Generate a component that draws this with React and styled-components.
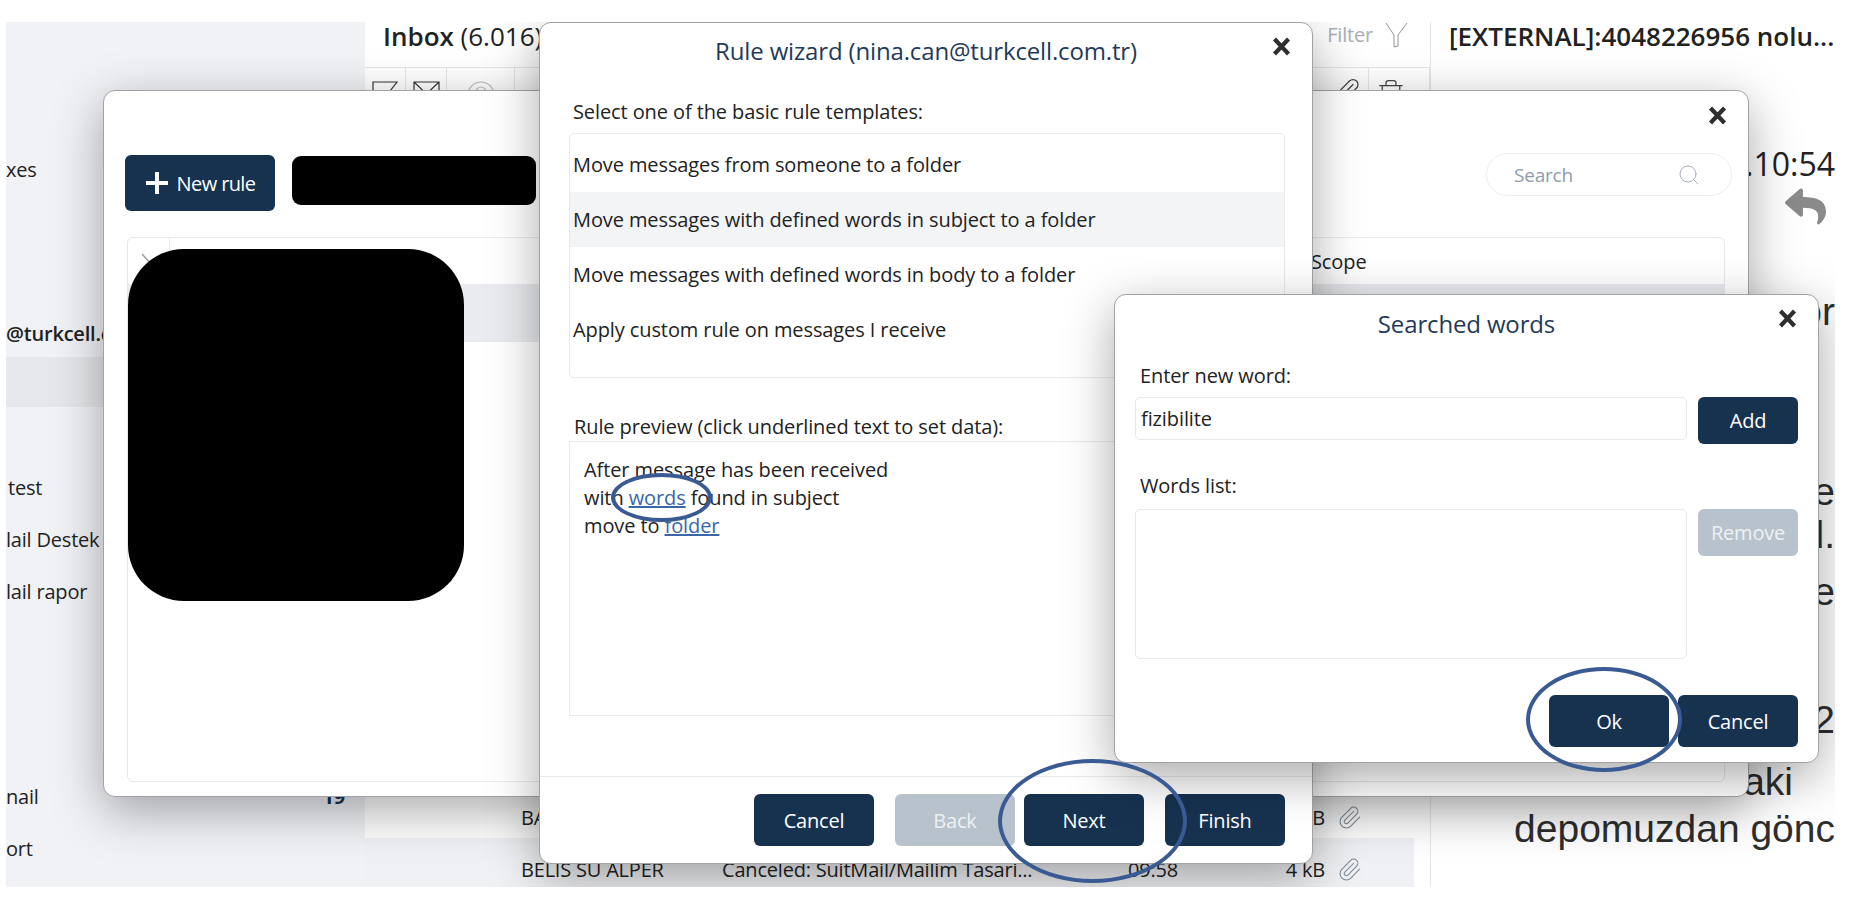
import React from 'react';
import styled, { createGlobalStyle } from 'styled-components';
import { Search, Paperclip, Trash2 } from 'lucide-react';
import { FaReply } from 'react-icons/fa';

const UI_FONT = '"Open Sans", "Noto Sans", sans-serif';
const NAVY = '#16324f';

const GlobalStyle = createGlobalStyle`
  html, body { margin: 0; padding: 0; background: #fff; }
  body { font-family: ${UI_FONT}; color: #222; }
  * { box-sizing: border-box; }
`;

const Screen = styled.div`
  position: relative;
  display: flex;
  width: 1829px;
  height: 865px;
  margin: 22px 0 0 6px;
  overflow: hidden;
  background: #fff;
`;

const Sidebar = styled.aside`
  width: 359px;
  flex-shrink: 0;
  background: #f1f2f6;
  display: flex;
  flex-direction: column;
`;

const SideItem = styled.div`
  display: flex;
  align-items: center;
  justify-content: space-between;
  height: 40px;
  margin-top: ${props => props.$top}px;
  padding: 0 20px 0 ${props => props.$indent || 0}px;
  font-size: 20px;
  letter-spacing: -0.2px;
  font-weight: ${props => (props.$strong ? 600 : 400)};
  white-space: nowrap;
`;

const SideSelected = styled.div`
  height: 50px;
  margin-top: 4px;
  background: #e5e7ea;
`;

const Count = styled.span`
  color: ${NAVY};
  font-weight: 700;
`;

const MessageList = styled.section`
  width: 1066px;
  flex-shrink: 0;
  display: flex;
  flex-direction: column;
  border-right: 1px solid #e6e7ea;
`;

const ListHead = styled.div`
  display: flex;
  align-items: flex-start;
  justify-content: space-between;
  height: 45px;
  padding: 0 22px 0 18px;
`;

const ListTitle = styled.div`
  font-size: 26px;
  line-height: 28px;
  white-space: nowrap;
  b { font-weight: 600; }
`;

const FilterBox = styled.div`
  display: flex;
  align-items: flex-start;
  gap: 12px;
  color: #a9afb7;
  font-size: 20px;
  line-height: 26px;
  letter-spacing: -0.2px;
`;

const ListTools = styled.div`
  display: flex;
  justify-content: space-between;
  height: 50px;
  border-top: 1px solid #e4e5e9;
  border-bottom: 1px solid #e4e5e9;
`;

const ToolGroup = styled.div`
  display: flex;
`;

const ToolCell = styled.div`
  display: flex;
  justify-content: center;
  width: ${props => props.$width}px;
  padding: ${props => props.$top || 13}px ${props => props.$right || 0}px 0 0;
  border-right: 1px solid #e4e5e9;
  color: #444;
`;

const Rows = styled.div`
  flex: 1;
  display: flex;
  flex-direction: column;
  justify-content: flex-end;
`;

const MailRow = styled.div`
  display: grid;
  grid-template-columns: 201px 406px 130px 67px 1fr;
  align-items: center;
  height: ${props => props.$height}px;
  padding-left: 156px;
  padding-top: ${props => props.$drop}px;
  margin-right: 16px;
  background: ${props => (props.$shaded ? '#f0f1f4' : '#fff')};
  font-size: 20px;
  letter-spacing: -0.2px;
  white-space: nowrap;
`;

const MailSize = styled.span`
  text-align: right;
`;

const MailClip = styled(Paperclip)`
  margin-left: 12px;
`;

const ReadingPane = styled.section`
  flex: 1;
  min-width: 0;
  display: flex;
  flex-direction: column;
  overflow: hidden;
`;

const Subject = styled.div`
  height: 30px;
  line-height: 28px;
  padding-left: 18px;
  font-size: 26px;
  font-weight: 600;
  white-space: nowrap;
`;

const SentTime = styled.div`
  margin-top: 94px;
  text-align: right;
  font-size: 32px;
  line-height: 36px;
  color: #222;
`;

const ReplyRow = styled.div`
  display: flex;
  justify-content: flex-end;
  padding: 4px 9px 0 0;
  color: #8a8a8a;
  line-height: 0;
`;

const BodyLine = styled.div`
  margin-top: ${props => props.$top}px;
  height: 42px;
  padding-right: ${props => props.$pad || 0}px;
  line-height: 42px;
  font-family: "Liberation Sans", Arial, sans-serif;
  font-size: 39px;
  color: #2e2e2e;
  text-align: right;
  white-space: nowrap;
`;

const Dialog = styled.div`
  position: absolute;
  left: ${props => props.$left}px;
  top: ${props => props.$top}px;
  width: ${props => props.$width}px;
  height: ${props => props.$height}px;
  display: flex;
  flex-direction: column;
  background: #fff;
  border: 1px solid #a2a2a2;
  border-radius: 12px;
  box-shadow: 0 14px 50px rgba(0, 0, 0, 0.34);
`;

const CloseButton = styled.button`
  position: absolute;
  right: ${props => props.$right}px;
  top: ${props => props.$top}px;
  padding: 0;
  border: 0;
  background: none;
  color: #2f2f2f;
  line-height: 0;
`;

const Button = styled.button`
  width: ${props => props.$width || 120}px;
  height: ${props => props.$height || 52}px;
  flex-shrink: 0;
  border: 0;
  border-radius: 6px;
  background: ${props => (props.disabled ? '#b8c2cc' : NAVY)};
  color: ${props => (props.disabled ? '#eef1f4' : '#fff')};
  font-family: ${UI_FONT};
  font-size: 20px;
  letter-spacing: -0.2px;
`;

const RulesTop = styled.div`
  display: flex;
  align-items: flex-start;
  height: 146px;
  padding: 64px 16px 0 21px;
`;

const NewRule = styled(Button)`
  display: flex;
  align-items: center;
  justify-content: center;
  gap: 8px;
  width: 150px;
  height: 56px;
  letter-spacing: -0.6px;
`;

const RedactedBar = styled.div`
  width: 244px;
  height: 49px;
  margin: 1px 0 0 17px;
  border-radius: 9px;
  background: #000;
`;

const SearchPill = styled.div`
  display: flex;
  align-items: center;
  justify-content: space-between;
  width: 246px;
  height: 43px;
  margin: -2px 0 0 auto;
  padding: 0 30px 0 27px;
  border: 1px solid #eceef1;
  border-radius: 22px;
  color: #8e9bab;
  font-size: 19px;
  letter-spacing: -0.2px;
`;

const RulesTable = styled.div`
  position: relative;
  flex: 1;
  margin: 0 23px 14px 23px;
  border: 1px solid #e8e9ec;
  border-radius: 6px;
`;

const TableHead = styled.div`
  display: flex;
  align-items: center;
  height: 47px;
  border-bottom: 1px solid #e8e9ec;
  font-size: 20px;
  letter-spacing: -0.1px;
`;

const CheckCell = styled.div`
  display: flex;
  align-items: center;
  justify-content: center;
  width: 42px;
  height: 100%;
  border-right: 1px solid #e8e9ec;
  color: #9a9a9a;
`;

const ScopeCell = styled.div`
  width: 413px;
  margin-left: auto;
`;

const SelectedRule = styled.div`
  height: 57px;
  background: #e9ebee;
`;

const RedactedBlock = styled.div`
  position: absolute;
  left: 0;
  top: 11px;
  width: 336px;
  height: 352px;
  border-radius: 56px;
  background: #000;
`;

const WizardTitle = styled.h2`
  margin: 0;
  padding-top: 13px;
  height: 75px;
  text-align: center;
  font-size: 24px;
  line-height: 30px;
  font-weight: 400;
  letter-spacing: -0.15px;
  color: #1f3a58;
`;

const WizardBody = styled.div`
  flex: 1;
  display: flex;
  flex-direction: column;
  padding: 2px 27px 0 29px;
`;

const FieldLabel = styled.div`
  font-size: 20px;
  line-height: 24px;
  letter-spacing: -0.1px;
  margin-left: ${props => props.$indent || 0}px;
`;

const TemplateList = styled.ul`
  list-style: none;
  height: 245px;
  margin: 9px 0 0;
  padding: 3px 0 0;
  border: 1px solid #e8e9ec;
  border-radius: 5px;
`;

const Template = styled.li`
  display: flex;
  align-items: center;
  height: 55px;
  padding-left: 3px;
  background: ${props => (props.$active ? '#f3f4f6' : 'transparent')};
  font-size: 20px;
  letter-spacing: -0.1px;
`;

const PreviewLabel = styled(FieldLabel)`
  margin-top: 37px;
`;

const PreviewBox = styled.div`
  height: 275px;
  margin-top: 2px;
  padding: 14px 14px;
  border: 1px solid #e8e9ec;
  font-size: 20px;
  line-height: 28px;
  letter-spacing: -0.1px;
`;

const RuleLink = styled.a`
  color: #3a66a8;
  text-decoration: underline;
`;

const WizardFooter = styled.div`
  display: flex;
  justify-content: flex-end;
  align-items: flex-start;
  height: 87px;
  padding: 17px 27px 0 0;
  border-top: 1px solid #e8e9ec;
`;

const FooterButton = styled(Button)`
  margin-left: ${props => props.$gap}px;
`;

const WordsTitle = styled.h3`
  margin: 0;
  height: 66px;
  padding-top: 14px;
  text-align: center;
  font-size: 24px;
  line-height: 30px;
  font-weight: 400;
  letter-spacing: -0.15px;
  color: #1f3a58;
`;

const WordsBody = styled.div`
  flex: 1;
  display: grid;
  grid-template-columns: 552px 100px;
  column-gap: 11px;
  grid-template-rows: 33px 47px 30px 35px 150px;
  padding: 3px 20px 0 20px;
`;

const WordsLabel = styled(FieldLabel)`
  grid-column: 1 / -1;
`;

const WordInput = styled.input`
  width: 100%;
  height: 43px;
  padding: 0 5px;
  border: 1px solid #e8e9ec;
  border-radius: 5px;
  font-family: ${UI_FONT};
  font-size: 20px;
  letter-spacing: -0.1px;
  color: #222;
`;

const WordsListBox = styled.div`
  height: 150px;
  border: 1px solid #e8e9ec;
  border-radius: 5px;
`;

const WordsGap = styled.div`
  grid-column: 1 / -1;
`;

const WordsFooter = styled.div`
  display: flex;
  justify-content: flex-end;
  gap: 9px;
  padding: 0 20px 15px 0;
`;

const Ring = styled.div`
  position: absolute;
  left: ${props => props.$x - 6}px;
  top: ${props => props.$y - 22}px;
  width: ${props => props.$w}px;
  height: ${props => props.$h}px;
  border: 4px solid #3a5a94;
  border-radius: 50%;
  pointer-events: none;
`;

const CloseIcon = () => (
  <svg width="19" height="19" viewBox="0 0 19 19" fill="none" stroke="currentColor" strokeWidth="4.2">
    <path d="M2.5 2 L16.5 17 M16.5 2 L2.5 17" />
  </svg>
);

const PlusIcon = () => (
  <svg width="24" height="24" viewBox="0 0 24 24" fill="none" stroke="#fff" strokeWidth="4">
    <path d="M12 1 V23 M1 12 H23" />
  </svg>
);

const HeaderTick = () => (
  <svg width="16" height="16" viewBox="0 0 16 16" fill="none" stroke="currentColor" strokeWidth="1.4">
    <path d="M1 1 L11 12" />
  </svg>
);

const FunnelIcon = () => (
  <svg width="23" height="26" viewBox="0 0 23 26" fill="none" stroke="#8f959c" strokeWidth="1">
    <path d="M1 1 L9 13 V25 L13 24 V13 L22 1" />
  </svg>
);

const FlagIcon = () => (
  <svg width="26" height="28" viewBox="0 0 26 28" fill="none" stroke="#333" strokeWidth="1.2">
    <path d="M1 27 V1 H25 L18 10 L25 19 H1" />
  </svg>
);

const EnvelopeIcon = () => (
  <svg width="27" height="22" viewBox="0 0 27 22" fill="none" stroke="#333" strokeWidth="1.2">
    <path d="M1 1 H26 V21 H1 Z M1 1 L13.5 13 L26 1" />
  </svg>
);

const PersonIcon = () => (
  <svg width="28" height="28" viewBox="0 0 28 28" fill="none" stroke="#b9bcc0" strokeWidth="1.2">
    <circle cx="14" cy="14" r="13" />
    <circle cx="14" cy="11" r="5" />
  </svg>
);

const App = () => (
  <>
    <GlobalStyle />
    <Screen>
      <Sidebar>
        <SideItem $top={127}>xes</SideItem>
        <SideItem $top={124} $strong>@turkcell.com</SideItem>
        <SideSelected />
        <SideItem $top={60} $indent={2}>test</SideItem>
        <SideItem $top={12}>lail Destek</SideItem>
        <SideItem $top={12}>lail rapor</SideItem>
        <SideItem $top={165}>nail<Count>19</Count></SideItem>
        <SideItem $top={12}>ort</SideItem>
      </Sidebar>

      <MessageList>
        <ListHead>
          <ListTitle><b>Inbox</b> (6.016)</ListTitle>
          <FilterBox>Filter <FunnelIcon /></FilterBox>
        </ListHead>
        <ListTools>
          <ToolGroup>
            <ToolCell $width={41}><FlagIcon /></ToolCell>
            <ToolCell $width={41}><EnvelopeIcon /></ToolCell>
            <ToolCell $width={68}><PersonIcon /></ToolCell>
          </ToolGroup>
          <ToolGroup>
            <ToolCell $width={41} $top={9}><Paperclip size={30} strokeWidth={1} /></ToolCell>
            <ToolCell $width={61} $top={10} $right={16}><Trash2 size={30} strokeWidth={1} /></ToolCell>
          </ToolGroup>
        </ListTools>
        <Rows>
          <MailRow $height={41} $drop={0}>
            <span>BARIŞ</span><span /><span />
            <MailSize>3 kB</MailSize>
            <MailClip size={25} strokeWidth={1} color="#7d8a96" />
          </MailRow>
          <MailRow $height={49} $drop={14} $shaded>
            <span>BELIS SU ALPER</span>
            <span>Canceled: SuitMail/Mailim Tasari...</span>
            <span>09:58</span>
            <MailSize>4 kB</MailSize>
            <MailClip size={25} strokeWidth={1} color="#7d8a96" />
          </MailRow>
        </Rows>
      </MessageList>

      <ReadingPane>
        <Subject>[EXTERNAL]:4048226956 nolu...</Subject>
        <SentTime>.10:54</SentTime>
        <ReplyRow><FaReply size={41} /></ReplyRow>
        <BodyLine $top={64}>or</BodyLine>
        <BodyLine $top={138}>te</BodyLine>
        <BodyLine $top={1}>d.</BodyLine>
        <BodyLine $top={15}>e</BodyLine>
        <BodyLine $top={86}>2</BodyLine>
        <BodyLine $top={20} $pad={42}>aki</BodyLine>
        <BodyLine $top={5}>depomuzdan gönc</BodyLine>
      </ReadingPane>

      <Dialog $left={97} $top={68} $width={1646} $height={707}>
        <CloseButton $right={21} $top={15}><CloseIcon /></CloseButton>
        <RulesTop>
          <NewRule><PlusIcon /> New rule</NewRule>
          <RedactedBar />
          <SearchPill>Search <Search size={24} strokeWidth={1} color="#a8b0ba" /></SearchPill>
        </RulesTop>
        <RulesTable>
          <TableHead>
            <CheckCell><HeaderTick /></CheckCell>
            <ScopeCell>Scope</ScopeCell>
          </TableHead>
          <SelectedRule />
          <RedactedBlock />
        </RulesTable>
      </Dialog>

      <Dialog $left={533} $top={0} $width={774} $height={842}>
        <CloseButton $right={21} $top={14}><CloseIcon /></CloseButton>
        <WizardTitle>Rule wizard (nina.can@turkcell.com.tr)</WizardTitle>
        <WizardBody>
          <FieldLabel $indent={4}>Select one of the basic rule templates:</FieldLabel>
          <TemplateList>
            <Template>Move messages from someone to a folder</Template>
            <Template $active>Move messages with defined words in subject to a folder</Template>
            <Template>Move messages with defined words in body to a folder</Template>
            <Template>Apply custom rule on messages I receive</Template>
          </TemplateList>
          <PreviewLabel $indent={5}>Rule preview (click underlined text to set data):</PreviewLabel>
          <PreviewBox>
            After message has been received<br />
            with <RuleLink>words</RuleLink> found in subject<br />
            move to <RuleLink>folder</RuleLink>
          </PreviewBox>
        </WizardBody>
        <WizardFooter>
          <FooterButton>Cancel</FooterButton>
          <FooterButton $gap={21} disabled>Back</FooterButton>
          <FooterButton $gap={9}>Next</FooterButton>
          <FooterButton $gap={21}>Finish</FooterButton>
        </WizardFooter>
      </Dialog>

      <Dialog $left={1108} $top={272} $width={705} $height={469}>
        <CloseButton $right={21} $top={14}><CloseIcon /></CloseButton>
        <WordsTitle>Searched words</WordsTitle>
        <WordsBody>
          <WordsLabel $indent={5}>Enter new word:</WordsLabel>
          <WordInput defaultValue="fizibilite" />
          <Button $width={100} $height={47}>Add</Button>
          <WordsGap />
          <WordsLabel $indent={5}>Words list:</WordsLabel>
          <WordsListBox />
          <Button $width={100} $height={47} disabled>Remove</Button>
        </WordsBody>
        <WordsFooter>
          <Button>Ok</Button>
          <Button>Cancel</Button>
        </WordsFooter>
      </Dialog>

      <Ring $x={611} $y={473} $w={101} $h={49} />
      <Ring $x={998} $y={759} $w={189} $h={124} />
      <Ring $x={1526} $y={667} $w={156} $h={105} />
    </Screen>
  </>
);

export default App;
